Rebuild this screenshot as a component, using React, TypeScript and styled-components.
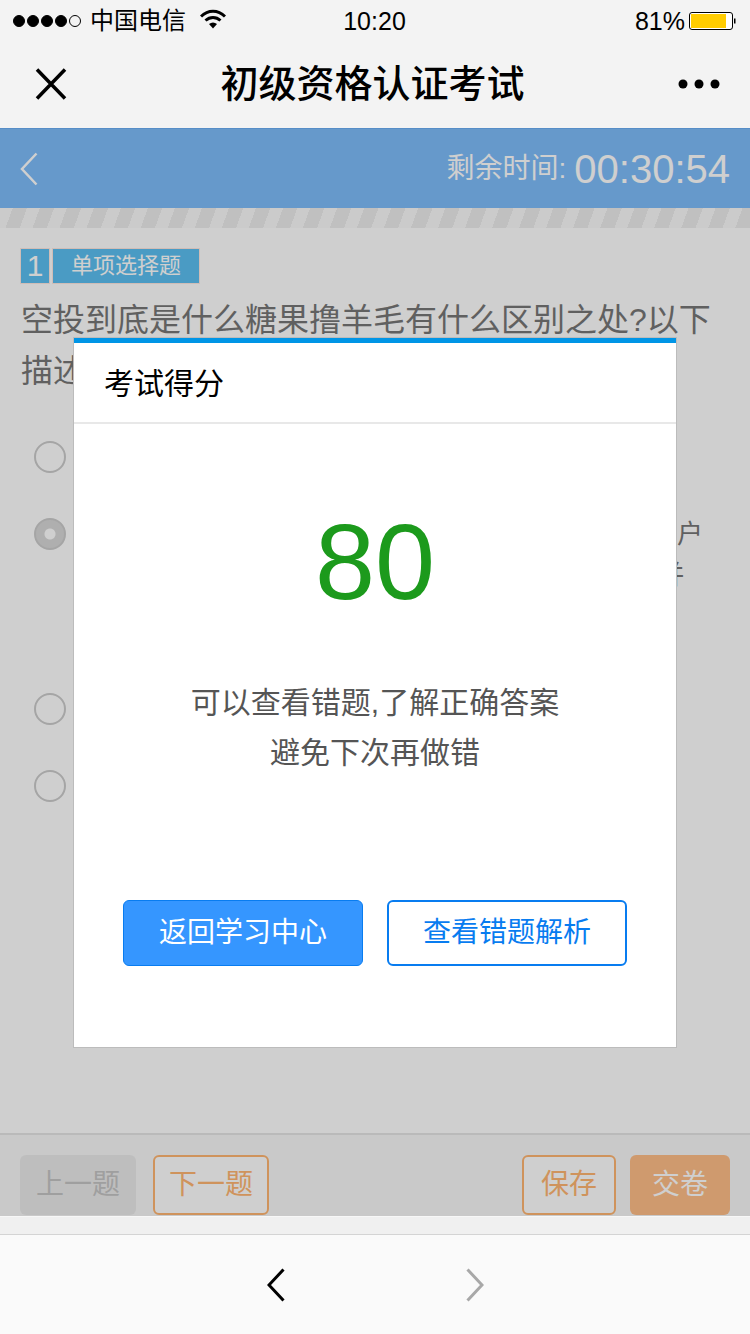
import React from "react";
import styled, { createGlobalStyle } from "styled-components";

const Global = createGlobalStyle`
  html, body { margin: 0; padding: 0; background: #fafafa; }
  body { font-family: "Liberation Sans", "Noto Sans CJK SC", sans-serif; }
  * { box-sizing: border-box; }
`;
const Phone = styled.div`
  width: 750px; height: 1334px; display: flex; flex-direction: column; overflow: hidden;
`;
const Chrome = styled.div`background: #f3f3f3; height: 128px; display: flex; flex-direction: column;`;
const StatusBar = styled.div`
  height: 44px; display: grid; grid-template-columns: 1fr auto 1fr; align-items: center;
  padding: 0 14px 2px 13px; font-size: 25px; color: #000;
`;
const StatusLeft = styled.div`display: flex; align-items: center;`;
const Dot = styled.span<{ $empty?: boolean }>`
  width: 12px; height: 12px; border-radius: 50%; margin-right: 2px; flex: none;
  background: ${p => (p.$empty ? "transparent" : "#000")};
  border: 1px solid #000;
`;
const Carrier = styled.span`font-size: 24px; margin: 0 14px 0 7px; line-height: 1;`;
const StatusRight = styled.div`display: flex; align-items: center; justify-content: flex-end; gap: 4px;`;
const Clock = styled.span`line-height: 1;`;
const NavBar = styled.div`
  flex: 1; display: flex; align-items: center; justify-content: space-between;
  padding: 0 30px 4px 35px;
`;
const Title = styled.div`font-size: 38px; font-weight: 500; color: #000; line-height: 1;`;
const Web = styled.div`
  position: relative; height: 1088px; background: #fff; display: flex; flex-direction: column;
`;
const Header = styled.div`
  height: 80px; background: #7ebdfb; border-top: 1px solid #6aaef5; display: flex; align-items: center;
  justify-content: space-between; padding: 0 20px; color: #fff;
`;
const Timer = styled.div`display: flex; align-items: center; gap: 8px;`;
const TimerLabel = styled.span`font-size: 28px; line-height: 1;`;
const TimerValue = styled.span`font-size: 40px; line-height: 1;`;
const Stripes = styled.div`
  height: 20px;
  background: repeating-linear-gradient(110deg, #fbfbfb 0 12px, #ededed 12px 25.4px);
`;
const Content = styled.div`flex: 1; padding: 20px 20px 0; display: flex; flex-direction: column;`;
const BadgeRow = styled.div`display: flex; gap: 2px; height: 36px;`;
const Badge = styled.div<{ $w: number; $size: number }>`
  width: ${p => p.$w}px; background: #5cbff2; border: 1px solid #ffe9e2; color: #fff;
  display: flex; align-items: center; justify-content: center; font-size: ${p => p.$size}px; line-height: 1;
`;
const Question = styled.div`
  font-size: 32px; line-height: 51px; color: #777; margin: 11px 0 0 1px; width: 710px;
`;
const Options = styled.div`display: flex; flex-direction: column; margin-top: 40px; padding-left: 14px;`;
const Option = styled.div<{ $pad?: number }>`
  display: flex; gap: 13px; align-items: flex-start; padding-bottom: ${p => p.$pad ?? 36}px;
`;
const Radio = styled.span<{ $on?: boolean }>`
  width: 32px; height: 32px; border-radius: 50%; flex: none; margin-top: 4px;
  border: 2px solid #ccc;
  background: ${p => (p.$on ? "radial-gradient(circle, #fff 0 5px, #d8d8d8 6px 100%)" : "transparent")};
`;
const OptionText = styled.div`width: 624px; font-size: 26px; line-height: 41px; color: #777;`;
const Toolbar = styled.div`
  height: 83px; flex: none; background: #f8f8f8; border-top: 2px solid #e6e6e6;
  padding: 20px 20px 1px; display: flex; gap: 17px; align-items: stretch;
`;
const Spacer = styled.div`flex: 1;`;
const ToolButton = styled.div<{ $w: number; $kind: "off" | "line" | "fill" }>`
  width: ${p => p.$w}px; border-radius: 6px; font-size: 28px; display: flex; align-items: center;
  justify-content: center; line-height: 1;
  ${p => p.$kind === "off" && "background:#ebebeb;color:#c4c4c4;"}
  ${p => p.$kind === "line" && "background:#fff;border:2px solid #ffb672;color:#ffb672;"}
  ${p => p.$kind === "fill" && "background:#ffbe88;color:#fff;"}
  margin-left: ${p => (p.$w === 100 ? "-3px" : "0")};
`;
const Scrim = styled.div`position: absolute; inset: 0; background: rgba(0, 0, 0, 0.19);`;
const Modal = styled.div`
  position: absolute; left: 74px; top: 210px; width: 602px; height: 709px; background: #fff;
  border-top: 5px solid #0095e6; display: flex; flex-direction: column; align-items: center;
  box-shadow: 0 0 0 1px #bcbcbc;
`;
const ModalHead = styled.div`
  align-self: stretch; height: 81px; border-bottom: 2px solid #e8e8e8; padding: 0 30px 4px;
  display: flex; align-items: center; font-size: 30px; color: #000;
`;
const Score = styled.div`
  font-size: 108px; line-height: 1; color: #1c9a1c; margin-top: 84px;
`;
const Message = styled.div`
  margin-top: 62px; font-size: 30px; line-height: 50px; color: #555; text-align: center;
`;
const Actions = styled.div`display: flex; gap: 24px; margin-top: 122px;`;
const ActionButton = styled.div<{ $solid?: boolean }>`
  width: 240px; height: 66px; border-radius: 6px; border: 2px solid #087cf0;
  background: ${p => (p.$solid ? "#3596ff" : "#fff")}; color: ${p => (p.$solid ? "#fff" : "#087cf0")};
  border-width: ${p => (p.$solid ? "1px" : "2px")};
  display: flex; align-items: center; justify-content: center; font-size: 28px; line-height: 1;
`;
const BrowserGap = styled.div`height: 19px; background: #f0f0f0; border-top: 1px solid #f7f7f7; border-bottom: 1px solid #d4d4d4;`;
const BrowserBar = styled.div`
  flex: 1; background: #fafafa; display: flex; align-items: center; justify-content: center; gap: 181px;
  padding-top: 1px;
`;

const Chevron = ({ dir, color, w = 3 }: { dir: "l" | "r"; color: string; w?: number }) => (
  <svg width="18" height="34" viewBox="0 0 18 34" fill="none" style={{ display: "block" }}>
    <path d={dir === "l" ? "M16.5 1.5 2 17l14.5 15.5" : "M1.5 1.5 16 17 1.5 32.5"} stroke={color} strokeWidth={w} />
  </svg>
);

export default function App() {
  return (
    <Phone>
      <Global />
      <Chrome>
        <StatusBar>
          <StatusLeft>
            <Dot /><Dot /><Dot /><Dot /><Dot $empty />
            <Carrier>中国电信</Carrier>
            <svg width="26" height="20" viewBox="0 0 26 20" style={{ marginTop: -5 }}>
              <path d="M1 7.5C8 .5 18 .5 25 7.5" fill="none" stroke="#000" strokeWidth="3" />
              <path d="M5.5 11.5c4.5-4 10.5-4 15 0" fill="none" stroke="#000" strokeWidth="3" />
              <path d="M9 15c2.5-2 5.500-2 8 0l-4 4.500z" fill="#000" />
            </svg>
          </StatusLeft>
          <Clock>10:20</Clock>
          <StatusRight>
            <Clock>81%</Clock>
            <svg width="47" height="20" viewBox="0 0 47 20">
              <rect x="0.500" y="1.500" width="43" height="17" rx="2.500" fill="#fff" stroke="#000" />
              <rect x="2" y="3" width="35" height="14" fill="#ffcc00" />
              <path d="M45 7.500h1.500v5H45z" fill="#000" />
            </svg>
          </StatusRight>
        </StatusBar>
        <NavBar>
          <svg width="32" height="32" viewBox="0 0 32 32">
            <path d="M2 1.500 30 30.500M30 1.500 2 30.500" stroke="#000" strokeWidth="3.500" fill="none" />
          </svg>
          <Title>初级资格认证考试</Title>
          <svg width="42" height="10" viewBox="0 0 42 10">
            <circle cx="5" cy="5" r="4.500" fill="#000" />
            <circle cx="21" cy="5" r="4.500" fill="#000" />
            <circle cx="37" cy="5" r="4.500" fill="#000" />
          </svg>
        </NavBar>
      </Chrome>
      <Web>
        <Header>
          <Chevron dir="l" color="#fff" w={2.500} />
          <Timer>
            <TimerLabel>剩余时间:</TimerLabel>
            <TimerValue>00:30:54</TimerValue>
          </Timer>
        </Header>
        <Stripes />
        <Content>
          <BadgeRow>
            <Badge $w={30} $size={30}>1</Badge>
            <Badge $w={148} $size={22}>单项选择题</Badge>
          </BadgeRow>
          <Question>空投到底是什么糖果撸羊毛有什么区别之处?以下描述正确的是哪一项内容</Question>
          <Options>
            <Option>
              <Radio />
              <OptionText>空投是项目方免费发放代币给用户的一种活动A线索</OptionText>
            </Option>
            <Option $pad={52}>
              <Radio $on />
              <OptionText>糖果是项目方为了推广而赠送的代币撸羊毛则对应用户领取各种平台奖励的行为获得少量的资金回报,两者并无本质区别</OptionText>
            </Option>
            <Option>
              <Radio />
              <OptionText>空投是项目方免费发放代币给用户的一种活动B线索</OptionText>
            </Option>
            <Option>
              <Radio />
              <OptionText>空投是项目方免费发放代币给用户的一种活动C线索</OptionText>
            </Option>
          </Options>
        </Content>
        <Toolbar>
          <ToolButton $w={116} $kind="off">上一题</ToolButton>
          <ToolButton $w={116} $kind="line">下一题</ToolButton>
          <Spacer />
          <ToolButton $w={94} $kind="line">保存</ToolButton>
          <ToolButton $w={100} $kind="fill">交卷</ToolButton>
        </Toolbar>
        <Scrim />
        <Modal>
          <ModalHead>考试得分</ModalHead>
          <Score>80</Score>
          <Message>
            可以查看错题,了解正确答案
            <br />
            避免下次再做错
          </Message>
          <Actions>
            <ActionButton $solid>返回学习中心</ActionButton>
            <ActionButton>查看错题解析</ActionButton>
          </Actions>
        </Modal>
      </Web>
      <BrowserGap />
      <BrowserBar>
        <Chevron dir="l" color="#000" />
        <Chevron dir="r" color="#a8a8a8" />
      </BrowserBar>
    </Phone>
  );
}
